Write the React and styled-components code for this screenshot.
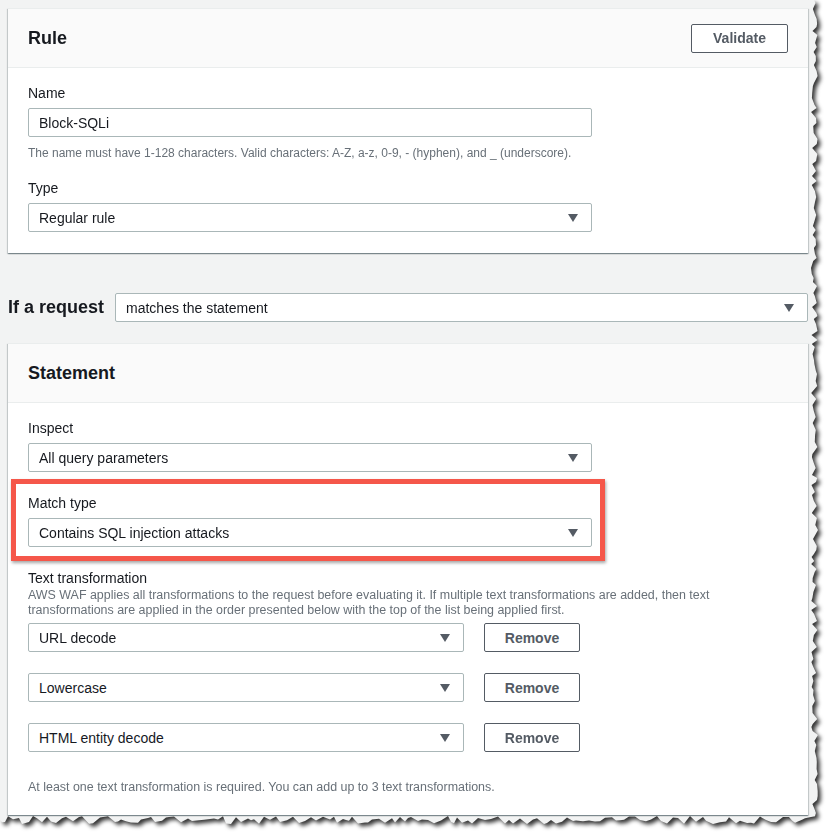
import React from "react";
import styled, { createGlobalStyle } from "styled-components";

const GlobalStyle = createGlobalStyle`
  html, body {
    margin: 0;
    padding: 0;
    background: #ffffff;
  }
  body {
    font-family: "Liberation Sans", Arial, sans-serif;
    color: #16191f;
  }
`;

// deterministic jagged edge for the torn-paper screenshot look
const tornClip = (() => {
  let seed = 7;
  const rand = () => {
    seed = (seed * 16807) % 2147483647;
    return (seed % 1000) / 1000;
  };
  const pts = ["0px 0px", "814px 0px"];
  for (let y = 3; y < 818; y += 3 + Math.floor(rand() * 5)) {
    pts.push(`${(811 + rand() * 7).toFixed(1)}px ${y}px`);
  }
  for (let x = 815; x > 0; x -= 3 + Math.floor(rand() * 5)) {
    pts.push(`${x}px ${(816 + rand() * 8).toFixed(1)}px`);
  }
  pts.push("0px 820px");
  return `polygon(${pts.join(", ")})`;
})();

const Frame = styled.div`
  width: 830px;
  height: 836px;
  filter: drop-shadow(3px 3px 2px rgba(0, 0, 0, 0.8));
`;

const Sheet = styled.div`
  width: 820px;
  height: 826px;
  background: #f2f3f3;
  clip-path: ${tornClip};
  padding: 8px 0 0 8px;
  box-sizing: border-box;
  overflow: hidden;
`;

const Column = styled.div`
  width: 800px;
  display: flex;
  flex-direction: column;
`;

const Panel = styled.section`
  background: #ffffff;
  box-shadow: 0 1px 1px 0 rgba(0, 28, 36, 0.3),
    1px 1px 1px 0 rgba(0, 28, 36, 0.15), -1px 1px 1px 0 rgba(0, 28, 36, 0.15);
  border-top: 1px solid #eaeded;
`;

const PanelHeader = styled.header`
  height: 58px;
  background: #fafafa;
  border-bottom: 1px solid #eaeded;
  display: flex;
  align-items: center;
  justify-content: space-between;
  padding: 0 20px;
`;

const Title = styled.h2`
  margin: 0;
  font-size: 18px;
  font-weight: 700;
  color: #16191f;
`;

const PanelBody = styled.div`
  padding: ${(p) => p.$pad || "15px 20px 21px"};
  display: flex;
  flex-direction: column;
`;

const Field = styled.div`
  position: relative;
  display: flex;
  flex-direction: column;
  margin-top: ${(p) => p.$gap || 0}px;
`;

const Label = styled.div`
  font-size: 14px;
  line-height: 20px;
  color: #16191f;
  margin-bottom: ${(p) => (p.$tight ? 0 : 5)}px;
`;

const Hint = styled.div`
  font-size: ${(p) => p.$size || 12}px;
  line-height: ${(p) => p.$lh || 16}px;
  color: #687078;
  margin-top: ${(p) => p.$top || 0}px;
  white-space: nowrap;
`;

const Input = styled.div`
  width: ${(p) => p.$width || 564}px;
  height: 29px;
  box-sizing: border-box;
  border: 1px solid #aab7b8;
  border-radius: 2px;
  background: #ffffff;
  display: flex;
  align-items: center;
  padding: 0 13px 0 10px;
  font-size: 14px;
  color: #16191f;
`;

const SelectBox = styled(Input)`
  justify-content: space-between;
  flex: ${(p) => (p.$grow ? 1 : "none")};
`;

const Arrow = () => (
  <svg width="10" height="8" viewBox="0 0 10 8">
    <polygon points="0,0 10,0 5,8" fill="#545b64" />
  </svg>
);

const Select = ({ value, width, grow }) => (
  <SelectBox $width={width} $grow={grow}>
    <span>{value}</span>
    <Arrow />
  </SelectBox>
);

const Button = styled.button`
  width: ${(p) => p.$width || 96}px;
  height: 29px;
  box-sizing: border-box;
  background: #ffffff;
  border: 1px solid #545b64;
  border-radius: 2px;
  color: #545b64;
  font-family: "Liberation Sans", Arial, sans-serif;
  font-size: 14px;
  font-weight: 700;
  padding: 0;
`;

const RequestRow = styled.div`
  display: flex;
  align-items: center;
  gap: 11px;
  margin: 40px 0 21px;
`;

const RequestLabel = styled.span`
  font-size: 18px;
  font-weight: 700;
  color: #16191f;
`;

const Highlight = styled.div`
  position: absolute;
  top: -14px;
  left: -17px;
  width: 594px;
  height: 82px;
  box-sizing: border-box;
  border: 5px solid #f5574a;
  box-shadow: 1px 2px 3px rgba(0, 0, 0, 0.35);
  pointer-events: none;
`;

const TransformList = styled.div`
  display: flex;
  flex-direction: column;
  gap: 21px;
  margin-top: 5px;
`;

const TransformRow = styled.div`
  display: flex;
  align-items: center;
  gap: 20px;
`;

const transforms = ["URL decode", "Lowercase", "HTML entity decode"];

export default function App() {
  return (
    <>
      <GlobalStyle />
      <Frame>
        <Sheet>
          <Column>
            <Panel>
              <PanelHeader>
                <Title>Rule</Title>
                <Button $width={97}>Validate</Button>
              </PanelHeader>
              <PanelBody>
                <Field>
                  <Label>Name</Label>
                  <Input>Block-SQLi</Input>
                  <Hint $top={8}>
                    The name must have 1-128 characters. Valid characters:
                    A-Z, a-z, 0-9, - (hyphen), and _ (underscore).
                  </Hint>
                </Field>
                <Field $gap={17}>
                  <Label>Type</Label>
                  <Select value="Regular rule" />
                </Field>
              </PanelBody>
            </Panel>

            <RequestRow>
              <RequestLabel>If a request</RequestLabel>
              <Select value="matches the statement" grow />
            </RequestRow>

            <Panel>
              <PanelHeader>
                <Title>Statement</Title>
              </PanelHeader>
              <PanelBody $pad="15px 20px 20px">
                <Field>
                  <Label>Inspect</Label>
                  <Select value="All query parameters" />
                </Field>
                <Field $gap={21}>
                  <Highlight />
                  <Label>Match type</Label>
                  <Select value="Contains SQL injection attacks" />
                </Field>
                <Field $gap={21}>
                  <Label $tight>Text transformation</Label>
                  <Hint $lh={15} $size={12.45}>
                    AWS WAF applies all transformations to the request before
                    evaluating it. If multiple text transformations are added,
                    then text
                    <br />
                    transformations are applied in the order presented below
                    with the top of the list being applied first.
                  </Hint>
                  <TransformList>
                    {transforms.map((t) => (
                      <TransformRow key={t}>
                        <Select value={t} width={436} />
                        <Button>Remove</Button>
                      </TransformRow>
                    ))}
                  </TransformList>
                  <Hint $top={27} $size={12.45}>
                    At least one text transformation is required. You can add
                    up to 3 text transformations.
                  </Hint>
                </Field>
              </PanelBody>
            </Panel>
          </Column>
        </Sheet>
      </Frame>
    </>
  );
}
